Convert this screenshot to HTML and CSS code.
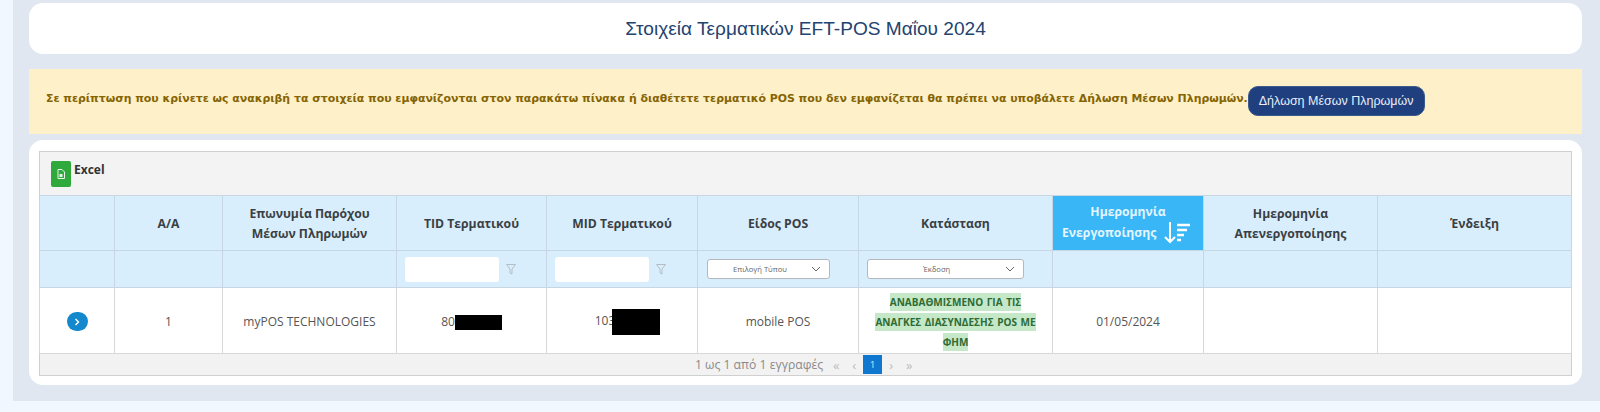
FILE: index.html
```html
<!DOCTYPE html>
<html lang="en">
<head>
  <meta charset="UTF-8">
  <meta name="viewport" content="width=device-width, initial-scale=1.0">
  <title>Στοιχεία Τερματικών EFT-POS</title>
  <link rel="stylesheet" href="styles.css">
</head>
<body>

  <div class="panel">
    <div class="title-card">
      <h1>Στοιχεία Τερματικών EFT-POS Μαΐου 2024</h1>
    </div>

    <div class="alert">
      <span class="alert-text">Σε περίπτωση που κρίνετε ως ανακριβή τα στοιχεία που εμφανίζονται στον παρακάτω πίνακα ή διαθέτετε τερματικό POS που δεν εμφανίζεται θα πρέπει να υποβάλετε Δήλωση Μέσων Πληρωμών.</span>
      <button class="declare">Δήλωση Μέσων Πληρωμών</button>
    </div>

    <div class="table-card">
      <div class="toolbar">
        <button class="excel">
          <svg width="8" height="10" viewBox="0 0 8 10"><path d="M1 .5h4l2.500 2.500v6.500h-6.500z" fill="none" stroke="#e6f6e6" stroke-width="1"/><path d="M2.500 5h3v3h-3z" fill="#e6f6e6"/></svg>
        </button>
        <span class="excel-label">Excel</span>
      </div>

      <table>
        <colgroup>
          <col class="c-expand"><col class="c-aa"><col class="c-name"><col class="c-tid"><col class="c-mid">
          <col class="c-type"><col class="c-status"><col class="c-on"><col class="c-off"><col class="c-flag">
        </colgroup>
        <thead>
          <tr class="head-row">
            <th></th>
            <th>Α/Α</th>
            <th>Επωνυμία Παρόχου<br>Μέσων Πληρωμών</th>
            <th>TID Τερματικού</th>
            <th>MID Τερματικού</th>
            <th>Είδος POS</th>
            <th>Κατάσταση</th>
            <th class="sorted">
              <div>Ημερομηνία</div>
              <div class="sorted-line">Ενεργοποίησης
                <svg class="sort-icon" width="27" height="22" viewBox="0 0 27 22">
                  <path d="M6 0v20M1 15l5 5 5-5" fill="none" stroke="#fff" stroke-width="2"/>
                  <path d="M13 3h13M13 8h10M13 13h7M13 18h4" fill="none" stroke="#fff" stroke-width="2.500"/>
                </svg>
              </div>
            </th>
            <th>Ημερομηνία<br>Απενεργοποίησης</th>
            <th>Ένδειξη</th>
          </tr>
          <tr class="filter-row">
            <th></th>
            <th></th>
            <th></th>
            <th>
              <div class="filter"><input type="text">
                <svg width="10" height="11" viewBox="0 0 10 11"><path d="M.5.500h9l-3.500 4.500v5l-2-1v-4z" fill="none" stroke="#b5bdc4"/></svg>
              </div>
            </th>
            <th>
              <div class="filter"><input type="text">
                <svg width="10" height="11" viewBox="0 0 10 11"><path d="M.5.500h9l-3.500 4.500v5l-2-1v-4z" fill="none" stroke="#b5bdc4"/></svg>
              </div>
            </th>
            <th><div class="select select-type">Επιλογή Τύπου<svg width="10" height="6" viewBox="0 0 10 6"><path d="M1 1l4 4 4-4" fill="none" stroke="#666"/></svg></div></th>
            <th><div class="select select-status">Έκδοση<svg width="10" height="6" viewBox="0 0 10 6"><path d="M1 1l4 4 4-4" fill="none" stroke="#666"/></svg></div></th>
            <th></th>
            <th></th>
            <th></th>
          </tr>
        </thead>
        <tbody>
          <tr class="data-row">
            <td>
              <button class="expand"><svg width="6" height="8" viewBox="0 0 6 8"><path d="M1.500 1l3 3-3 3" fill="none" stroke="#fff" stroke-width="1.400"/></svg></button>
            </td>
            <td>1</td>
            <td>myPOS TECHNOLOGIES</td>
            <td>80<span class="redact redact-tid"></span></td>
            <td>103<span class="redact redact-mid"></span></td>
            <td>mobile POS</td>
            <td class="status-cell"><span class="status">ΑΝΑΒΑΘΜΙΣΜΕΝΟ ΓΙΑ ΤΙΣ ΑΝΑΓΚΕΣ ΔΙΑΣΥΝΔΕΣΗΣ POS ΜΕ ΦΗΜ</span></td>
            <td>01/05/2024</td>
            <td></td>
            <td></td>
          </tr>
        </tbody>
      </table>

      <div class="pager">
        <span class="pager-info">1 ως 1 από 1 εγγραφές</span>
        <span class="pager-link">«</span>
        <span class="pager-link">‹</span>
        <span class="pager-current">1</span>
        <span class="pager-link">›</span>
        <span class="pager-link">»</span>
      </div>
    </div>
  </div>

</body>
</html>
```

FILE: styles.css
```css
body {
  margin: 0;
  background: #f0f7fe;
  font-family: "Open Sans", sans-serif;
  color: #333;
}

.panel {
  margin-left: 13px;
  height: 401px;
  box-sizing: border-box;
  padding: 3px 18px 0 16px;
  background: #e0e7f0;
}

.title-card {
  height: 51px;
  background: white;
  border-radius: 14px;
  display: flex;
  align-items: center;
  justify-content: center;
}

h1 {
  margin: 0;
  font-family: "Liberation Sans", sans-serif;
  font-size: 19.100px;
  font-weight: normal;
  color: #24436f;
}

.alert {
  height: 65px;
  margin-top: 15px;
  box-sizing: border-box;
  padding: 17px 17px 0;
  background: #fef0c8;
  display: flex;
  align-items: flex-start;
}

.alert-text {
  margin-top: 5px;
  font-family: "DejaVu Sans", sans-serif;
  font-size: 10.920px;
  font-weight: bold;
  line-height: 16px;
  color: #856404;
  white-space: nowrap;
}

.declare {
  height: 30px;
  padding: 0 10px;
  border: 1px solid #3a5a8c;
  border-radius: 10px;
  background: #1f3f7f;
  color: #e8eef8;
  font-family: "Liberation Sans", sans-serif;
  font-size: 12.500px;
  white-space: nowrap;
}

.table-card {
  margin-top: 6px;
  height: 245px;
  box-sizing: border-box;
  padding: 11px 10px 10px;
  background: white;
  border-radius: 14px;
}

.toolbar {
  height: 44px;
  box-sizing: border-box;
  padding: 9px 11px;
  background: #f3f3f3;
  border: 1px solid #d0d0d0;
  border-bottom: none;
  display: flex;
  align-items: flex-start;
}

.excel {
  width: 20px;
  height: 26px;
  padding: 0;
  border: none;
  border-radius: 2px;
  background: #2fa83c;
}

.excel-label {
  margin: 1px 0 0 3px;
  font-size: 12px;
  font-weight: bold;
  line-height: 16px;
  color: #333;
}

table {
  width: 100%;
  table-layout: fixed;
  border-collapse: collapse;
}

.c-expand { width: 75px; }
.c-aa { width: 108px; }
.c-name { width: 174px; }
.c-tid { width: 150px; }
.c-mid { width: 151px; }
.c-type { width: 161px; }
.c-status { width: 194px; }
.c-on { width: 151px; }
.c-off { width: 174px; }

th, td {
  padding: 0;
  text-align: center;
  vertical-align: middle;
}

th {
  background: #d9eefc;
  border: 1px solid #c6d6e2;
  font-size: 12.200px;
  font-weight: bold;
  line-height: 20px;
  color: #3a3f44;
}

td {
  padding-top: 2px;
  border: 1px solid #d8d8d8;
  font-size: 12px;
  color: #555;
}

.head-row { height: 55px; }
.head-row th { padding-top: 2px; }
.filter-row { height: 37px; }
.data-row { height: 66px; }

.head-row th.sorted {
  padding-top: 0;
  background: #38b6f6;
  color: #e4f5fe;
}

.sorted-line {
  display: flex;
  align-items: center;
  padding-left: 9px;
  gap: 8px;
}

.filter {
  display: flex;
  align-items: center;
  padding-left: 8px;
  gap: 7px;
}

.filter input {
  width: 94px;
  height: 25px;
  box-sizing: border-box;
  border: none;
  border-radius: 3px;
  background: white;
}

.select {
  height: 20px;
  box-sizing: border-box;
  padding: 0 8px 0 0;
  background: white;
  border: 1px solid #b4b8bc;
  border-radius: 3px;
  font-size: 7.600px;
  font-weight: normal;
  line-height: 18px;
  color: #666;
  display: flex;
  align-items: center;
  justify-content: space-between;
}

.select-type { width: 123px; margin-left: 9px; padding-left: 25px; }
.select-status { width: 157px; margin-left: 8px; padding-left: 55px; }

.expand {
  width: 21px;
  height: 19px;
  padding: 0;
  border: none;
  border-radius: 10px;
  background: #1488cc;
}

.redact {
  display: inline-block;
  vertical-align: middle;
  background: black;
}

.redact-tid { width: 47px; height: 15px; }
.redact-mid { width: 48px; height: 26px; margin-left: -3px; margin-right: -11px; }

.status-cell {
  padding: 3px 15px 0;
  line-height: 19px;
}

.status {
  background: #c5e8c8;
  color: #2e6b34;
  font-size: 10px;
  font-weight: bold;
  word-spacing: 1px;
  padding: 2px 0;
}

.pager {
  height: 22px;
  box-sizing: border-box;
  background: #f2f2f2;
  border: 1px solid #d0d0d0;
  border-top: none;
  display: flex;
  align-items: center;
  justify-content: center;
  padding-left: 2px;
  font-size: 12.200px;
  color: #8a8a8a;
}

.pager-info { margin-right: 4px; }

.pager-link {
  width: 18px;
  font-size: 13px;
  text-align: center;
  color: #bbb;
}

.pager-current {
  width: 19px;
  height: 19px;
  background: #0f77d0;
  color: #dcecfa;
  font-size: 9px;
  line-height: 19px;
  text-align: center;
}
```
